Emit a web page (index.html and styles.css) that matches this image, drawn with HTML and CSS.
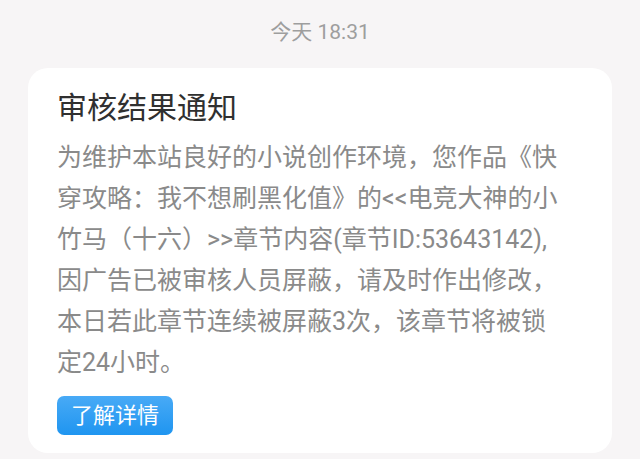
FILE: index.html
```html
<!DOCTYPE html>
<html lang="zh-CN">
<head>
<meta charset="utf-8">
<link rel="stylesheet" href="styles.css">
</head>
<body>
<div class="page">
  <div class="time">今天 18:31</div>
  <div class="card">
    <div class="title">审核结果通知</div>
    <div class="body">
      <span class="line">为维护本站良好的小说创作环境，您作品《快</span>
      <span class="line">穿攻略：我不想刷黑化值》的&lt;&lt;电竞大神的小</span>
      <span class="line">竹马（十六）&gt;&gt;章节内容(章节ID:53643142),</span>
      <span class="line">因广告已被审核人员屏蔽，请及时作出修改，</span>
      <span class="line">本日若此章节连续被屏蔽3次，该章节将被锁</span>
      <span class="line">定24小时。</span>
    </div>
    <div class="actions"><button class="btn">了解详情</button></div>
  </div>
</div>
</body>
</html>
```

FILE: styles.css
```css
html, body {
  margin: 0;
  padding: 0;
  background: #f7f5f6;
  font-family: Roboto, "Noto Sans CJK SC", sans-serif;
}
.page {
  padding-top: 18px;
  width: 640px;
  height: 459px;
  box-sizing: border-box;
  overflow: hidden;
}
.time {
  text-align: center;
  font-size: 21px;
  line-height: 28px;
  color: #9e9e9e;
}
.card {
  margin: 22px 28px 0;
  background: #ffffff;
  border-radius: 20px;
  padding: 20px 20px 18px 29px;
}
.title {
  font-size: 30px;
  line-height: 40px;
  color: #303030;
}
.body {
  margin-top: 9px;
  font-size: 25px;
  line-height: 41px;
  color: #8a8a8a;
}
.line {
  display: block;
  white-space: nowrap;
}
.actions {
  margin-top: 13px;
  display: flex;
}
.btn {
  border: none;
  border-radius: 7px;
  background: linear-gradient(#48aaf6, #1f95f0);
  color: #ffffff;
  font-family: inherit;
  font-size: 22px;
  height: 39px;
  width: 116px;
  padding: 0;
  line-height: 39px;
}
```
